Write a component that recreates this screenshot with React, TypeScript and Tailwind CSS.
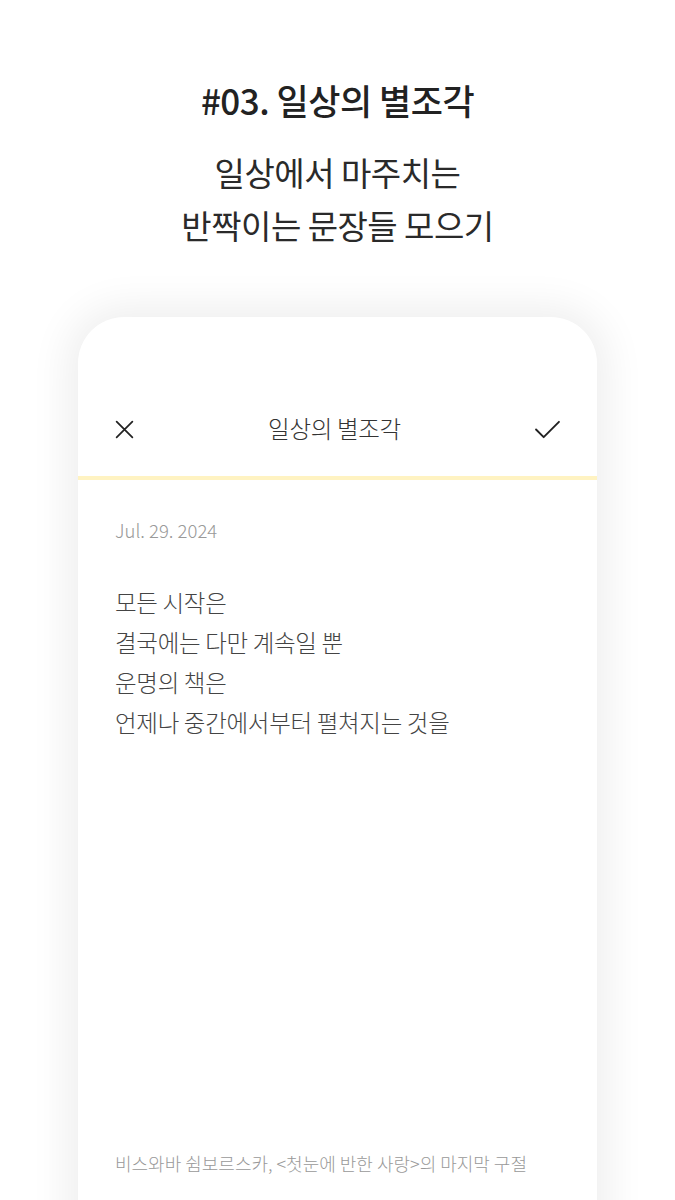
const LINES = [
  "모든 시작은",
  "결국에는 다만 계속일 뿐",
  "운명의 책은",
  "언제나 중간에서부터 펼쳐지는 것을",
];

const FONT = "font-['Pretendard','Noto_Sans_CJK_KR','Noto_Sans',sans-serif]";

const App = () => {
  return (
    <div className={`w-[675px] h-[1200px] overflow-hidden bg-white ${FONT}`}>
      {/* Heading */}
      <div className="pt-[76px] text-center text-[#222]">
        <h1 className="text-[35px] font-medium leading-[48px] tracking-[-0.5px]">
          #03. 일상의 별조각
        </h1>
        <p className="mt-[22px] text-[33px] leading-[53px] tracking-[-0.5px] text-[#2a2a2a]">
          일상에서 마주치는
          <br />
          반짝이는 문장들 모으기
        </p>
      </div>

      {/* Phone card */}
      <div className="mx-[78px] mt-[65px] h-[920px] rounded-t-[46px] bg-white shadow-[0_0_40px_10px_rgba(0,0,0,0.07)] flex flex-col">
        <div className="pt-[84px] px-[36px] h-[159px]">
          <div className="h-[56px] flex items-center justify-between w-full">
            <svg width="21" height="21" viewBox="0 0 24 24" fill="none" stroke="#222" strokeWidth="2" strokeLinecap="round">
              <path d="M3 3L21 21M21 3L3 21" />
            </svg>
            <span className="text-[23.5px] text-[#333] tracking-[-0.3px] font-light">일상의 별조각</span>
            <svg width="27" height="21" viewBox="0 0 28 22" fill="none" stroke="#222" strokeWidth="2" strokeLinecap="round" strokeLinejoin="round">
              <path d="M2 11L10 19L26 3" />
            </svg>
          </div>
        </div>
        <div className="h-[4px] bg-[#fff3c2]" />

        <div className="px-[37px] flex-1 flex flex-col">
          <div className="mt-[38px] text-[18.5px] font-light text-[#999] leading-[24px]">Jul. 29. 2024</div>
          <div className="mt-[40px] text-[23.5px] font-light leading-[40px] text-[#444] tracking-[-0.3px]">
            {LINES.map((l) => (
              <div key={l}>{l}</div>
            ))}
          </div>
          <div className="mt-auto mb-[60px] text-[18px] font-light text-[#999] tracking-[0px]">
            비스와바 쉼보르스카, &lt;첫눈에 반한 사랑&gt;의 마지막 구절
          </div>
        </div>
      </div>
    </div>
  );
};

export default App;
